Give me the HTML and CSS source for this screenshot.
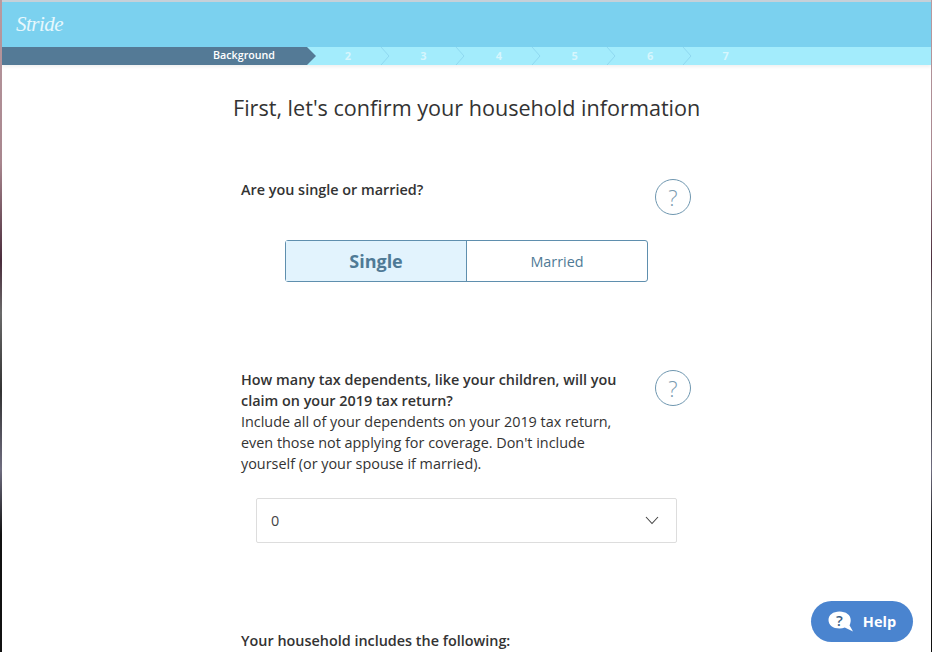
FILE: index.html

```html
<!DOCTYPE html>
<html><head>
  <meta charset="UTF-8">
  <meta name="viewport" content="width=device-width,initial-scale=1.0">
  <title>Stride</title>
  <link rel="stylesheet" href="styles.css">
</head><body>
<div id="window">
  <div id="top">
    <span class="logo">Stride</span>
  </div>
  <div id="steps">
    <div class="step first"><span class="lbl">Background</span>
      <svg class="tip" width="9" height="18" viewBox="0 0 9 18"><path d="M0 0L9 9L0 18Z" fill="#547a96"/></svg>
    </div>
    <div class="step"><span class="lbl">2</span><svg class="sep" width="10" height="18" viewBox="0 0 10 18"><path d="M1 0L9 9L1 18" fill="none" stroke="#8fd8f0"/></svg></div>
    <div class="step"><span class="lbl">3</span><svg class="sep" width="10" height="18" viewBox="0 0 10 18"><path d="M1 0L9 9L1 18" fill="none" stroke="#8fd8f0"/></svg></div>
    <div class="step"><span class="lbl">4</span><svg class="sep" width="10" height="18" viewBox="0 0 10 18"><path d="M1 0L9 9L1 18" fill="none" stroke="#8fd8f0"/></svg></div>
    <div class="step"><span class="lbl">5</span><svg class="sep" width="10" height="18" viewBox="0 0 10 18"><path d="M1 0L9 9L1 18" fill="none" stroke="#8fd8f0"/></svg></div>
    <div class="step"><span class="lbl">6</span><svg class="sep" width="10" height="18" viewBox="0 0 10 18"><path d="M1 0L9 9L1 18" fill="none" stroke="#8fd8f0"/></svg></div>
    <div class="step"><span class="lbl">7</span></div>
  </div>
  <div id="main">
    <h1>First, let's confirm your household information</h1>
    <div class="question q1">
      <div class="qtext"><b>Are you single or married?</b></div>
      <div class="qmark">?</div>
    </div>
    <div class="toggle">
      <div class="opt on">Single</div>
      <div class="opt">Married</div>
    </div>
    <div class="question q2">
      <div class="qtext"><b>How many tax dependents, like your children, will you claim on your 2019 tax return?</b><br>Include all of your dependents on your 2019 tax return, even those not applying for coverage. Don't include yourself (or your spouse if married).</div>
      <div class="qmark">?</div>
    </div>
    <div class="select">
      <span>0</span>
      <svg width="14" height="9" viewBox="0 0 14 9"><path d="M1 1L7 7.500L13 1" fill="none" stroke="#444" stroke-width="1.100"/></svg>
    </div>
    <div class="qtext q3"><b>Your household includes the following:</b></div>
  </div>
</div>
<div id="help">
  <svg width="26" height="21" viewBox="0 0 26 21">
    <path d="M11.500 0.500C5 0.500 0.500 4 0.500 9C0.500 14 5 17.500 11.500 17.500C13.500 17.500 15.200 17.200 16.800 16.600L25 20.500L21.500 14.300C22.300 12.900 22.700 11 22.700 9C22.700 4 18 0.500 11.500 0.500Z" fill="#fff"/>
    <text x="11.500" y="14.500" text-anchor="middle" class="helpq">?</text>
  </svg>
  <span>Help</span>
</div>
</body>
</html>
```

FILE: styles.css

```css
html,body{
  height:100%;
  margin:0;
  overflow:hidden;
}
body{
  background:linear-gradient(#b99aa0 0,#a8868e 25%,#4a2c3c 40%,#6a6a6a 48%,#333 60%,#6f6d80 72%,#111 82%,#111 100%);
  font-family:"Open Sans",sans-serif;
  color:#333;
  padding:0 1px 0 2px;
  box-sizing:border-box;
}
#window{
  background-color:#fff;
  border-top:2px solid #c6d0d8;
  box-sizing:border-box;
  height:100%;
  overflow:hidden;
}
#top{
  background-color:#7bd1ef;
  height:45px;
  padding-left:14px;
  box-sizing:border-box;
  display:flex;
  align-items:center;
}
.logo{
  color:#e6f8fd;
  font-family:"Liberation Serif",serif;
  font-style:italic;
  font-size:21px;
  letter-spacing:-0.5px;
}
#steps{
  background-color:#a3ecfc;
  height:18px;
  display:flex;
  box-shadow:0 2px 3px rgba(0,0,0,0.06);
}
.step{
  position:relative;
  width:75.6px;
  display:flex;
  align-items:center;
  justify-content:center;
  color:#d6f6fd;
  font-size:11px;
  font-weight:700;
}
.lbl{
  margin-top:-2px;
}
.step.first{
  width:305px;
  background-color:#547a96;
  color:#fff;
  font-size:10.700px;
  font-weight:600;
  justify-content:flex-end;
  padding-right:32px;
  box-sizing:border-box;
  margin-right:3px;
  flex:none;
}
.tip{
  position:absolute;
  left:100%;
  top:0;
}
.sep{
  position:absolute;
  right:-4px;
  top:0;
}
#main{
  width:450px;
  margin-left:239px;
}
h1{
  margin:28px 0 0 -8px;
  font-size:21.600px;
  line-height:30px;
  font-weight:400;
  white-space:nowrap;
}
.question{
  display:flex;
  justify-content:space-between;
}
.q1{
  margin-top:56px;
}
.q2{
  margin-top:87px;
}
.qtext{
  width:380px;
  font-size:14.400px;
  line-height:21px;
}
.qtext b{
  font-weight:600;
}
.qmark{
  flex:none;
  width:34px;
  height:34px;
  margin-top:1px;
  border:1px solid #6f97b0;
  border-radius:50%;
  color:#7a9bb0;
  font-size:22px;
  font-weight:300;
  line-height:34px;
  text-align:center;
}
.q1 .qmark{
  margin-top:0;
}
.toggle{
  display:flex;
  width:363px;
  height:42px;
  margin:25px 0 0 44px;
  border:1px solid #5f8fae;
  border-radius:3px;
  box-sizing:border-box;
}
.opt{
  flex:1;
  display:flex;
  align-items:center;
  justify-content:center;
  color:#4f7a96;
  font-size:14.400px;
}
.opt.on{
  background-color:#e2f3fd;
  border-right:1px solid #5f8fae;
  font-size:18px;
  font-weight:700;
}
.select{
  width:421px;
  height:45px;
  margin:23.500px 0 0 15px;
  padding:0 17px 0 14px;
  border:1px solid #ddd;
  border-radius:2px;
  box-sizing:border-box;
  display:flex;
  align-items:center;
  justify-content:space-between;
  font-size:14.400px;
  color:#444;
}
.q3{
  margin-top:87px;
  width:auto;
}
#help{
  position:absolute;
  left:811px;
  top:601px;
  width:102px;
  height:41px;
  border-radius:21px;
  background-color:#4a84cf;
  color:#fff;
  font-size:14.500px;
  font-weight:700;
  display:flex;
  align-items:center;
  justify-content:center;
  gap:9px;
}
.helpq{
  font-family:"Open Sans",sans-serif;
  font-size:15px;
  font-weight:600;
  fill:#3b5f86;
}
```
